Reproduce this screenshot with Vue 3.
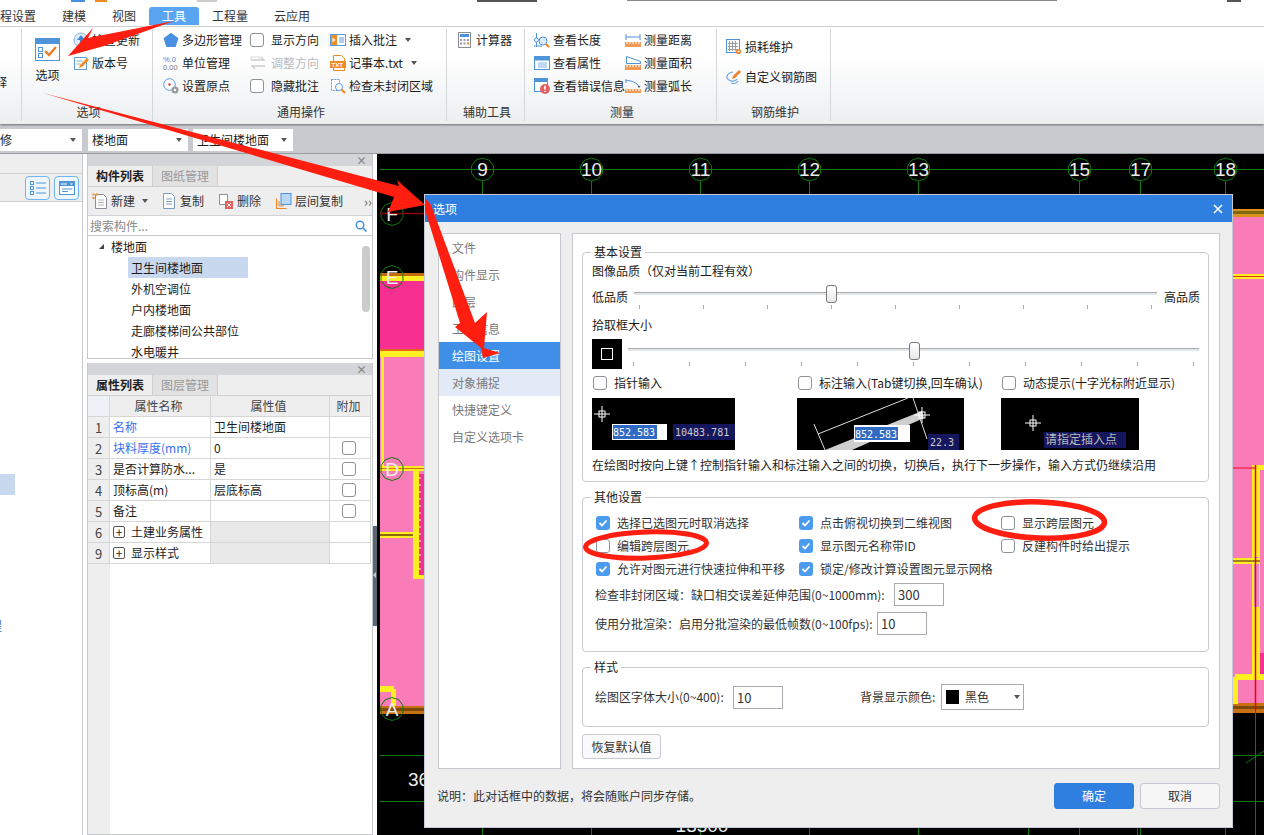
<script setup>
const icons = {
  options: '<rect x=".5" y=".5" width="24" height="22" fill="#fff" stroke="#4f94d8"/><rect x="1" y="1" width="23" height="5" fill="#4f94d8"/><rect x="3.5" y="9.5" width="4" height="4" fill="none" stroke="#4f94d8"/><rect x="3.5" y="15.5" width="4" height="4" fill="none" stroke="#4f94d8"/><path d="M10 13l4 4 7-8" fill="none" stroke="#f07c21" stroke-width="2.4"/>',
  update: '<circle cx="8" cy="8" r="7" fill="#dfeafa" stroke="#8fb6e6"/><path d="M8 3l4 5H9v4H7V8H4z" fill="#3f86d8"/>',
  version: '<path d="M1.500 2.500h12v12h-12z" fill="#fff" stroke="#5b9bdf"/><path d="M3.500 6h6M3.500 9h4" stroke="#8aa" /><path d="M6 13l1-3 7-7 2 2-7 7z" fill="#f08a24"/>',
  polygon: '<path d="M8 .8l7.500 5.400-2.900 8.800H3.400L.5 6.200z" fill="#4a90e2"/>',
  unit: '<text x="0" y="7" font-size="7.500" fill="#3f86d8" font-family="Liberation Sans">%.0</text><text x="0" y="15" font-size="7.500" fill="#777" font-family="Liberation Sans">0.00</text>',
  origin: '<circle cx="6.500" cy="6.500" r="5.800" fill="#fff" stroke="#5b9bdf"/><circle cx="6.500" cy="6.500" r="1.300" fill="#d9453d"/><circle cx="12" cy="12" r="3.500" fill="#999"/><circle cx="12" cy="12" r="1.300" fill="#fff"/>',
  adjust: '<path d="M1 5h13l-3-3M15 11H2l3 3" fill="none" stroke="#c9cbce" stroke-width="1.300"/><rect x="1" y="2" width="9" height="3" fill="none" stroke="#d8d9db"/>',
  note: '<rect x=".5" y="2.500" width="15" height="11" fill="#fff" stroke="#5b9bdf"/><rect x="1" y="3" width="6" height="10" fill="#f08a24"/><path d="M2.500 5.500l3 2.500-3 2.500z" fill="#fff"/><path d="M9 6h5M9 8h5M9 10h5" stroke="#5b9bdf"/>',
  txt: '<path d="M3.500.5h8l3 3v12h-11z" fill="#fff" stroke="#f08a24"/><rect x="0" y="6" width="16" height="7" fill="#f08a24"/><text x="1.500" y="11.800" font-size="6" font-weight="700" fill="#fff" font-family="Liberation Sans">TXT</text>',
  check: '<path d="M1.500 1.500h8v11h-8z" fill="#fff" stroke="#5b9bdf" stroke-dasharray="2 1"/><circle cx="9" cy="9" r="3.500" fill="#fff" stroke="#5b9bdf"/><path d="M11.500 11.500l3.500 3.500" stroke="#f08a24" stroke-width="2.200"/>',
  calc: '<rect x="1.500" y=".5" width="12" height="15" fill="#fff" stroke="#8b8f95"/><rect x="3" y="2" width="9" height="3" fill="#4a90e2"/><path d="M3 7h2v2H3zM6.500 7h2v2h-2zM10 7h2v2h-2zM3 10.500h2v2H3zM6.500 10.500h2v2h-2z" fill="#9a9da2"/><path d="M10 10.500h2v2h-2z" fill="#f08a24"/>',
  length: '<path d="M2.500 1v5M2.500 10v5" stroke="#4f94d8"/><circle cx="2.500" cy="8" r="2" fill="#fff" stroke="#4f94d8"/><circle cx="9" cy="9" r="4" fill="#dceafa" stroke="#4f94d8"/><path d="M12 12l3 3" stroke="#f08a24" stroke-width="2.200"/><path d="M0 14h8" stroke="#4f94d8"/>',
  props: '<rect x=".5" y="1.500" width="15" height="13" fill="#fff" stroke="#4f94d8"/><rect x="1" y="2" width="14" height="3.500" fill="#4f94d8"/><path d="M4 8h9M4 10h9M4 12h9" stroke="#7fb0e6"/>',
  errors: '<rect x=".5" y=".5" width="13" height="13" fill="#fff" stroke="#4f94d8"/><rect x="1" y="1" width="12" height="3" fill="#4f94d8"/><circle cx="11" cy="11" r="5" fill="#e4605e"/><path d="M11 7.800v3.700M11 12.800v1.200" stroke="#fff" stroke-width="1.600"/>',
  dist: '<path d="M1 2v6M15 2v6M1 5h14" fill="none" stroke="#4f94d8"/><rect x="0" y="10" width="16" height="5" fill="#f09b55"/><path d="M2 10v2M5 10v2M8 10v2M11 10v2M14 10v2" stroke="#fff"/>',
  area: '<path d="M1.500 1.500v7h14v-2z" fill="#fff" stroke="#4f94d8"/><rect x="0" y="10" width="16" height="5" fill="#f09b55"/><path d="M2 10v2M5 10v2M8 10v2M11 10v2M14 10v2" stroke="#fff"/>',
  arc: '<path d="M1 1v4M1 2.500c6 0 11 2 13 6.500" fill="none" stroke="#4f94d8"/><path d="M12.500 8h3l-1.500 2z" fill="#555"/><rect x="0" y="11" width="16" height="4" fill="#f09b55"/><path d="M2 11v2M5 11v2M8 11v2M11 11v2M14 11v2" stroke="#fff"/>',
  loss: '<rect x=".5" y=".5" width="13" height="13" fill="#fff" stroke="#4f94d8"/><path d="M3.500 2v10M6.500 2v10M9.500 2v10M2 4.500h10M2 7.500h10M2 10.500h10" stroke="#9a9da2"/><circle cx="12.500" cy="12.500" r="2.600" fill="#f0842a"/><circle cx="12.500" cy="12.500" r="1" fill="#fff"/>',
  rebar: '<path d="M7 3C1 4-1 9 3 11c3 2 7 1 8-1M5 14c3 1 6 0 7-2" fill="none" stroke="#6aa5e6" stroke-width="1.200"/><path d="M6 10l1-3 6-6 2 2-6 6z" fill="#f0842a"/>',
  add: '<path d="M3.500 1.500h8l3 3v11h-11z" fill="#fff" stroke="#8b8f95"/><path d="M6 7h6M6 9.500h6M6 12h6" stroke="#b0b3b8"/><path d="M.5.500h2v2h-2zM4 .5h2v2H4zM.5 4h2v2h-2z" fill="#f08a24"/>',
  copy: '<path d="M2.500.5h8l3 3v12h-11z" fill="#fff" stroke="#7f9cc0"/><path d="M5 6h6M5 8.500h6M5 11h6" stroke="#7f9cc0"/>',
  remove: '<path d="M1.500 1.500h8v10h-8z" fill="#fff" stroke="#8b8f95"/><rect x="7" y="8" width="8" height="8" fill="#e2615f"/><path d="M9 10l4 4M13 10l-4 4" stroke="#fff"/>',
  layer: '<rect x="5" y=".5" width="10" height="11" fill="#bcd7f5" stroke="#4f94d8"/><path d="M.5 5.500v10h10" fill="none" stroke="#f0842a" stroke-width="1.200"/><path d="M3 8v5h5" fill="none" stroke="#f0842a"/>'
}

const ribbonMain = [
  [
    { icon: 'polygon', text: '多边形管理' },
    { icon: 'unit', text: '单位管理' },
    { icon: 'origin', text: '设置原点' }
  ],
  [
    { box: true, text: '显示方向' },
    { icon: 'adjust', text: '调整方向', off: true, tight: true },
    { box: true, text: '隐藏批注' }
  ],
  [
    { icon: 'note', text: '插入批注', caret: true },
    { icon: 'txt', text: '记事本.txt', caret: true },
    { icon: 'check', text: '检查未封闭区域' }
  ]
]
const measureCols = [
  [
    { icon: 'length', text: '查看长度' },
    { icon: 'props', text: '查看属性' },
    { icon: 'errors', text: '查看错误信息' }
  ],
  [
    { icon: 'dist', text: '测量距离' },
    { icon: 'area', text: '测量面积' },
    { icon: 'arc', text: '测量弧长' }
  ]
]
const tabs = ['工程设置', '建模', '视图', '工具', '工程量', '云应用']

const treeItems = ['卫生间楼地面', '外机空调位', '户内楼地面', '走廊楼梯间公共部位', '水电暖井']
const propRows = [
  { no: 1, name: '名称', value: '卫生间楼地面', blue: true },
  { no: 2, name: '块料厚度(mm)', value: '0', blue: true, box: true },
  { no: 3, name: '是否计算防水...', value: '是', box: true },
  { no: 4, name: '顶标高(m)', value: '层底标高', box: true },
  { no: 5, name: '备注', value: '', box: true },
  { no: 6, name: '土建业务属性', group: true },
  { no: 9, name: '显示样式', group: true }
]

const navItems = ['文件', '构件显示', '图层', '工程信息', '绘图设置', '对象捕捉', '快捷键定义', '自定义选项卡']
const otherChecks = [
  { text: '选择已选图元时取消选择', on: true },
  { text: '点击俯视切换到二维视图', on: true },
  { text: '显示跨层图元', on: false },
  { text: '编辑跨层图元', on: false },
  { text: '显示图元名称带ID', on: true },
  { text: '反建构件时给出提示', on: false },
  { text: '允许对图元进行快速拉伸和平移', on: true },
  { text: '锁定/修改计算设置图元显示网格', on: true }
]

function octagon(cx, cy, r) {
  const pts = []
  for (let i = 0; i < 10; i++) {
    const a = (Math.PI * 2 * i) / 10 + 0.3
    pts.push(`${(cx + r * Math.cos(a)).toFixed(1)},${(cy + r * Math.sin(a)).toFixed(1)}`)
  }
  return pts.join(' ')
}
const axisX = [
  { x: 482, t: '9' },
  { x: 591, t: '10' },
  { x: 700, t: '11' },
  { x: 809, t: '12' },
  { x: 918, t: '13' },
  { x: 1079, t: '15' },
  { x: 1140, t: '17' },
  { x: 1225, t: '18' }
]
const axisY = [
  { y: 213, t: 'F' },
  { y: 276, t: 'E' },
  { y: 468, t: 'D' },
  { y: 708, t: 'A' }
]
</script>

<template>
  <div class="app">
    <div class="topline">
      <i class="mark m1"></i><i class="mark m2"></i><i class="mark m3"></i><i class="mark m4"></i>
      <i class="mark m5"></i><i class="mark m6"></i>
    </div>

    <nav class="tabs">
      <span v-for="t in tabs" :key="t" class="tab" :class="{ active: t === '工具' }">{{ t }}</span>
    </nav>

    <div class="ribbon">
      <section class="rb g0">
        <div class="rb-body"><span class="clip-char">注释</span></div>
      </section>

      <section class="rb g1">
        <div class="rb-body">
          <div class="big">
            <svg width="25" height="23" viewBox="0 0 25 23" v-html="icons.options"></svg>
            <span>选项</span>
          </div>
          <div class="rb-col">
            <div class="rb-item"><svg class="ic" viewBox="0 0 16 16" v-html="icons.update"></svg>检查更新</div>
            <div class="rb-item"><svg class="ic" viewBox="0 0 16 16" v-html="icons.version"></svg>版本号</div>
          </div>
        </div>
        <div class="rb-label">选项</div>
      </section>

      <section class="rb g2">
        <div class="rb-body">
          <div v-for="(col, i) in ribbonMain" :key="i" class="rb-col" :class="'c' + i">
            <div v-for="item in col" :key="item.text" class="rb-item" :class="{ off: item.off }">
              <span v-if="item.box" class="cb rb-cb"></span>
              <svg v-else class="ic" :class="{ wide: item.tight }" viewBox="0 0 16 16" v-html="icons[item.icon]"></svg>
              {{ item.text }}
              <i v-if="item.caret" class="caret rb-caret"></i>
            </div>
          </div>
        </div>
        <div class="rb-label">通用操作</div>
      </section>

      <section class="rb g3">
        <div class="rb-body">
          <div class="rb-item"><svg class="ic" viewBox="0 0 16 16" v-html="icons.calc"></svg>计算器</div>
        </div>
        <div class="rb-label">辅助工具</div>
      </section>

      <section class="rb g4">
        <div class="rb-body">
          <div v-for="(col, i) in measureCols" :key="i" class="rb-col m-col">
            <div v-for="item in col" :key="item.text" class="rb-item">
              <svg class="ic" viewBox="0 0 16 16" v-html="icons[item.icon]"></svg>{{ item.text }}
            </div>
          </div>
        </div>
        <div class="rb-label">测量</div>
      </section>

      <section class="rb g5">
        <div class="rb-body">
          <div class="rb-col">
            <div class="rb-item tall"><svg class="ic" viewBox="0 0 16 16" v-html="icons.loss"></svg>损耗维护</div>
            <div class="rb-item tall"><svg class="ic" viewBox="0 0 16 16" v-html="icons.rebar"></svg>自定义钢筋图</div>
          </div>
        </div>
        <div class="rb-label">钢筋维护</div>
      </section>
    </div>

    <div class="selects">
      <div class="sel s1"><span class="clip-char sel-clip">装修</span><i class="caret"></i></div>
      <div class="sel s2"><span>楼地面</span><i class="caret"></i></div>
      <div class="sel s3"><span>卫生间楼地面</span><i class="caret"></i></div>
    </div>

    <div class="main">
      <aside class="left">
        <div class="left-head"></div>
        <div class="left-tools">
          <span class="lbtn">
            <svg width="16" height="14" viewBox="0 0 16 14">
              <rect x=".5" y=".5" width="3" height="3" fill="none" stroke="#4f94d8" />
              <rect x=".5" y="5.500" width="3" height="3" fill="none" stroke="#4f94d8" />
              <rect x=".5" y="10.500" width="3" height="3" fill="none" stroke="#4f94d8" />
              <path d="M6 2h10M6 7h10M6 12h10" stroke="#4f94d8" />
            </svg>
          </span>
          <span class="lbtn">
            <svg width="16" height="14" viewBox="0 0 16 14">
              <rect x=".5" y=".5" width="15" height="13" fill="#fff" stroke="#4f94d8" />
              <rect x="1" y="1" width="14" height="4" fill="#4f94d8" />
              <path d="M3 2v2M5 2v2M7 2v2" stroke="#fff" />
              <path d="M11 2.500h3l-1.500 1.500z" fill="#fff" />
              <path d="M3 8h10M3 10.500h6" stroke="#4f94d8" />
            </svg>
          </span>
        </div>
        <div class="left-tree">
          <div class="left-sel"></div>
          <div class="left-frag">工程</div>
        </div>
      </aside>

      <div class="panels">
        <section class="panel p1">
          <header class="p-head"><span class="p-x">×</span></header>
          <div class="p-tabs">
            <span class="p-tab on">构件列表</span>
            <span class="p-tab">图纸管理</span>
          </div>
          <div class="p-tools">
            <span class="tool t-new"><svg class="ic" viewBox="0 0 16 16" v-html="icons.add"></svg>新建<i class="caret"></i></span>
            <span class="tool t-copy"><svg class="ic" viewBox="0 0 16 16" v-html="icons.copy"></svg>复制</span>
            <span class="tool t-del"><svg class="ic" viewBox="0 0 16 16" v-html="icons.remove"></svg>删除</span>
            <span class="tool t-layer"><svg class="ic" viewBox="0 0 16 16" v-html="icons.layer"></svg>层间复制</span>
            <span class="more">››</span>
          </div>
          <div class="p-search">
            <span>搜索构件...</span>
            <svg width="12" height="12" viewBox="0 0 12 12">
              <circle cx="5" cy="5" r="3.800" fill="none" stroke="#3f8fdc" stroke-width="1.400" />
              <path d="M8 8l3.500 3.500" stroke="#3f8fdc" stroke-width="1.600" />
            </svg>
          </div>
          <div class="p-tree">
            <div class="tree-root"><i class="tree-arrow"></i>楼地面</div>
            <div v-for="(t, i) in treeItems" :key="t" class="tree-row">
              <span :class="{ picked: i === 0 }">{{ t }}</span>
            </div>
            <div class="tree-scroll"></div>
          </div>
        </section>

        <section class="panel p2">
          <header class="p-head"><span class="p-x">×</span></header>
          <div class="p-tabs">
            <span class="p-tab on">属性列表</span>
            <span class="p-tab">图层管理</span>
          </div>
          <div class="grid-wrap">
            <div class="pr pr-head">
              <span class="cell idx"></span>
              <span class="cell mid">属性名称</span>
              <span class="cell mid">属性值</span>
              <span class="cell mid">附加</span>
            </div>
            <div v-for="r in propRows" :key="r.no" class="pr">
              <span class="cell idx">{{ r.no }}</span>
              <span class="cell" :class="{ blue: r.blue }">
                <i v-if="r.group" class="plus">+</i>{{ r.name }}
              </span>
              <span class="cell" :class="{ shade: r.group }">{{ r.value }}</span>
              <span class="cell mid"><i v-if="r.box" class="cb"></i></span>
            </div>
            <div class="pr-rest"></div>
          </div>
        </section>
      </div>

      <div class="splitter"><span class="split-bar"><i class="split-arrow"></i></span></div>

      <div class="canvas">
        <svg class="cad" width="887" height="682" viewBox="377 153 887 682">
          <rect x="380" y="356" width="884" height="349" fill="#f97cb8" />
          <rect x="1225" y="215" width="39" height="141" fill="#f97cb8" />
          <rect x="380" y="280" width="60" height="70" fill="#f62f90" />

          <rect x="1225" y="208" width="39" height="8" fill="#d9921a" />
          <rect x="1225" y="210" width="39" height="3" fill="#7d6a12" />
          <rect x="1225" y="273" width="39" height="5" fill="#ffee22" />
          <rect x="1225" y="275" width="39" height="1" fill="#e03020" />

          <rect x="380" y="272" width="60" height="8" fill="#ffee22" />
          <rect x="380" y="272" width="60" height="3" fill="#c46a10" />
          <rect x="380" y="348" width="60" height="8" fill="#ffee22" />
          <rect x="380" y="348" width="60" height="2" fill="#e5641c" />
          <rect x="381" y="356" width="3" height="110" fill="#ffee22" />
          <rect x="380" y="465" width="60" height="5" fill="#ffee22" />
          <rect x="380" y="467" width="60" height="1" fill="#d8701c" />
          <rect x="380" y="531" width="60" height="6" fill="#ffee22" />
          <rect x="380" y="533" width="60" height="2" fill="#8f6a10" />
          <rect x="413" y="470" width="6" height="108" fill="#ffee22" />
          <rect x="419" y="473" width="21" height="101" fill="#f62f90" />
          <rect x="415" y="574" width="25" height="4" fill="#ffee22" />
          <path d="M420 476V572" stroke="#fff" stroke-dasharray="2 5" />

          <rect x="380" y="685" width="14" height="6" fill="#ffee22" />
          <rect x="391" y="688" width="5" height="18" fill="#ffee22" />
          <rect x="380" y="705" width="60" height="8" fill="#c87012" />
          <rect x="380" y="707" width="60" height="3" fill="#7a4a0a" />

          <rect x="1225" y="702" width="39" height="10" fill="#c87012" />
          <rect x="1225" y="705" width="39" height="3" fill="#7a4a0a" />
          <rect x="1232" y="676" width="6" height="27" fill="#ffee22" />
          <rect x="1235" y="673" width="29" height="6" fill="#ffee22" />
          <rect x="1252" y="464" width="8" height="210" fill="#ffee22" />
          <rect x="1254" y="556" width="5" height="50" fill="#e88bc0" />
          <rect x="1232" y="557" width="28" height="6" fill="#ffee22" />
          <rect x="1232" y="559" width="28" height="2" fill="#a0801a" />
          <rect x="1260" y="464" width="4" height="5" fill="#ffee22" />
          <rect x="1260" y="652" width="4" height="21" fill="#f62f90" />
          <path d="M1232 467H1255" stroke="#f03050" stroke-width="1.500" />
          <path d="M1255.500 464V709" stroke="#f00000" stroke-width="1.500" />

          <g stroke="#0b7a0b" fill="none">
            <path d="M380 168.500H1264M380 754.500H1264M380 800.500H1264" />
            <path v-for="a in axisX" :key="a.t" :d="`M${a.x}.5 180V835`" />
            <path d="M1028.500 800V835M1137.500 800V835M1255.500 709V835M1246 762L1264 750" />
            <polygon v-for="a in axisX" :key="'o' + a.t" :points="octagon(a.x + 0.5, 168.5, 11.5)" />
            <polygon v-for="a in axisY" :key="'p' + a.t" :points="octagon(392, a.y, 11.5)" />
          </g>
          <path d="M380 212.500H425" stroke="#8a0a0a" stroke-width="1.500" />
          <g class="cad-text">
            <text v-for="a in axisX" :key="'t' + a.t" :x="a.x + 0.5" y="175" text-anchor="middle">{{ a.t }}</text>
            <text v-for="a in axisY" :key="'u' + a.t" x="392" :y="a.y + 7" text-anchor="middle">{{ a.t }}</text>
            <text x="408" y="785">3600</text>
            <text x="702" y="831" text-anchor="middle">13500</text>
          </g>
        </svg>
      </div>
    </div>

    <div class="dialog">
      <header class="d-title">
        <span>选项</span>
        <svg width="10" height="10" viewBox="0 0 10 10">
          <path d="M1 1l8 8M9 1l-8 8" stroke="#fff" stroke-width="1.600" />
        </svg>
      </header>
      <div class="d-body">
        <ul class="d-nav">
          <li v-for="n in navItems" :key="n" :class="{ cur: n === '绘图设置', hov: n === '对象捕捉' }">{{ n }}</li>
        </ul>
        <div class="d-panel">
          <div class="group g-basic">
            <span class="legend">基本设置</span>
            <div class="line">图像品质（仅对当前工程有效）</div>
            <div class="slider-row sr1">
              <span class="s-label">低品质</span>
              <div class="slider q">
                <i class="track"></i><i class="thumb"></i>
                <div class="ticks"><i v-for="n in 9" :key="n"></i></div>
              </div>
              <span class="s-label">高品质</span>
            </div>
            <div class="line l2">拾取框大小</div>
            <div class="slider-row sr2">
              <span class="pick"><i></i></span>
              <div class="slider p">
                <i class="track"></i><i class="thumb"></i>
                <div class="ticks"><i v-for="n in 11" :key="n"></i></div>
              </div>
            </div>
            <div class="tri checks">
              <label class="chk"><i class="cb"></i>指针输入</label>
              <label class="chk"><i class="cb"></i>标注输入(Tab键切换,回车确认)</label>
              <label class="chk"><i class="cb"></i>动态提示(十字光标附近显示)</label>
            </div>
            <div class="tri previews">
              <svg width="143" height="52" viewBox="0 0 143 52">
                <rect width="143" height="52" />
                <path d="M2 16h16M10 8v16" stroke="#fff" />
                <rect x="7" y="13" width="6" height="6" fill="none" stroke="#fff" />
                <rect x="20" y="26" width="55" height="16" fill="#fff" />
                <rect x="21" y="27" width="44" height="14" fill="#2f6bc4" />
                <text x="21" y="38" class="mono" fill="#fff">852.583</text>
                <rect x="81" y="26" width="62" height="16" fill="#16165c" />
                <text x="83" y="38" class="mono" fill="#ccc">10483.781</text>
              </svg>
              <svg width="167" height="52" viewBox="0 0 167 52">
                <rect width="167" height="52" />
                <path d="M28 52L125 13l2 7-72 32z" fill="#cfcfcf" />
                <path d="M21 36L111 0M17 26l11 26M116 0l14 41" stroke="#ddd" fill="none" />
                <path d="M117 17h16M125 9v16" stroke="#fff" />
                <rect x="122" y="14" width="6" height="6" fill="none" stroke="#fff" />
                <rect x="57" y="27" width="56" height="17" fill="#fff" />
                <rect x="58" y="29" width="43" height="13" fill="#2f6bc4" />
                <text x="58" y="40" class="mono" fill="#fff">852.583</text>
                <rect x="131" y="36" width="31" height="16" fill="#16165c" />
                <text x="133" y="48" class="mono" fill="#ccc">22.3</text>
              </svg>
              <svg width="138" height="52" viewBox="0 0 138 52">
                <rect width="138" height="52" />
                <path d="M24 25h16M32 17v16" stroke="#fff" />
                <rect x="29" y="22" width="6" height="6" fill="none" stroke="#fff" />
                <rect x="43" y="34" width="82" height="16" fill="#16165c" />
                <text x="44" y="46" class="cjk" fill="#bbb">请指定插入点</text>
              </svg>
            </div>
            <div class="line l3">在绘图时按向上键↑控制指针输入和标注输入之间的切换，切换后，执行下一步操作，输入方式仍继续沿用</div>
          </div>

          <div class="group g-other">
            <span class="legend">其他设置</span>
            <div class="other-grid">
              <label v-for="c in otherChecks" :key="c.text" class="chk" :class="{ flag: !c.on }">
                <i class="cb" :class="{ on: c.on }">
                  <svg v-if="c.on" width="14" height="14" viewBox="0 0 14 14">
                    <path d="M3.500 7l2.500 2.500 4.500-5" fill="none" stroke="#fff" stroke-width="1.800" />
                  </svg>
                </i>{{ c.text }}
              </label>
            </div>
            <div class="field f1"><span class="f-label w1">检查非封闭区域：缺口相交误差延伸范围(0~1000mm):</span><span class="inp">300</span></div>
            <div class="field f2"><span class="f-label w2">使用分批渲染：启用分批渲染的最低帧数(0~100fps):</span><span class="inp">10</span></div>
          </div>

          <div class="group g-style">
            <span class="legend">样式</span>
            <div class="field f3">
              <span class="f-label w3">绘图区字体大小(0~400):</span><span class="inp">10</span>
              <span class="f-label w4">背景显示颜色:</span>
              <span class="color-sel"><i class="swatch"></i>黑色<i class="caret"></i></span>
            </div>
          </div>

          <button class="reset">恢复默认值</button>
        </div>
      </div>
      <footer class="d-foot">
        <span class="d-note">说明：此对话框中的数据，将会随账户同步存储。</span>
        <button class="btn primary">确定</button>
        <button class="btn">取消</button>
      </footer>
    </div>

    <svg class="marks" width="1264" height="835" viewBox="0 0 1264 835">
      <g fill="#ff1e10">
        <path d="M174 21L88 38l5-10-25 28 36-10z" />
        <path d="M43 93L399 186l-2-6 28 25-37 7 6-15z" />
        <path d="M425 198l6 7 44 118 12-11-3 36 16 5-17 5-2-10-26-21 5-4-35-113z" />
      </g>
      <g fill="none" stroke="#ff1e10">
        <ellipse cx="1039.500" cy="520" rx="65" ry="18" stroke-width="5.500" transform="rotate(2 1039 520)" />
        <ellipse cx="646" cy="545" rx="60.500" ry="13" stroke-width="5" transform="rotate(-2 646 545)" />
      </g>
    </svg>
  </div>
</template>

<style>
html,
body {
  margin: 0;
  overflow: hidden;
  background: #fff;
}
</style>

<style scoped>
.app {
  position: relative;
  width: 1264px;
  height: 835px;
  overflow: hidden;
  display: flex;
  flex-direction: column;
  font: 12px/1 "Noto Sans CJK SC", "Liberation Sans", sans-serif;
  text-spacing-trim: space-all;
  color: #1c1c1c;
  background: #fff;
}
.topline {
  height: 7px;
  display: flex;
  align-items: flex-start;
}
.mark {
  display: block;
  height: 2px;
}
.m1 { width: 14px; margin-left: 71px; background: #4a90e2; }
.m2 { width: 12px; margin-left: 10px; background: #f08a24; }
.m3 { width: 20px; margin-left: 90px; background: #ccc; }
.m4 { width: 60px; margin-left: 260px; background: #555; }
.m5 { width: 430px; margin-left: 90px; height: 1px; background: #888; }
.m6 { width: 14px; margin-left: 170px; background: #555; }

.tabs {
  height: 19px;
  display: flex;
  margin-left: -25px;
  border-bottom: 1px solid #d8d8d8;
}
.tab {
  padding: 0 13px;
  height: 18px;
  line-height: 18px;
  color: #333;
}
.tab.active {
  background: #5aa5f2;
  color: #fff;
  border-radius: 3px 3px 0 0;
}

.ribbon {
  height: 97px;
  padding-top: 2px;
  box-sizing: border-box;
  display: flex;
  background: linear-gradient(#fff 30%, #eceef0);
  box-shadow: 0 1px 2px rgba(0, 0, 0, 0.45);
  position: relative;
}
.rb {
  box-sizing: border-box;
  height: 92px;
  border-right: 1px solid #d5d7da;
  display: flex;
  flex-direction: column;
  flex: none;
}
.rb-body {
  height: 76px;
  margin-top: -1px;
  box-sizing: border-box;
  display: flex;
}
.rb-label {
  text-align: center;
  padding-left: 3px;
  line-height: 18px;
  color: #333;
}
.g0 { width: 22px; overflow: hidden; border-right-color: #d5d7da; }
.g0 .rb-body { padding-top: 48px; }
.clip-char { margin-left: -17px; white-space: nowrap; }
.g1 { width: 131px; }
.g1 .rb-body { padding-left: 13px; }
.g2 { width: 294px; }
.g2 .rb-body { padding-left: 10px; }
.g3 { width: 78px; }
.g3 .rb-body { padding-left: 10px; }
.g4 { width: 192px; }
.g4 .rb-body { padding-left: 9px; }
.g5 { width: 114px; }
.g5 .rb-body { padding-left: 9px; padding-top: 4px; }
.big {
  width: 25px;
  margin-right: 13px;
  padding-top: 10px;
  display: flex;
  flex-direction: column;
  align-items: center;
  gap: 8px;
}
.rb-item {
  height: 23px;
  display: flex;
  align-items: center;
  white-space: nowrap;
}
.rb-item.tall { height: 30px; }
.rb-item.off { color: #b8babd; }
.ic {
  width: 16px;
  height: 16px;
  margin-right: 3px;
  flex: none;
}
.c0 { width: 87px; }
.c1 { width: 80px; }
.m-col { width: 102px; }
.rb-cb { margin-right: 7px; }
.ic.wide { margin-right: 5px; }
.rb-caret { margin-left: 8px; }

.cb {
  display: inline-block;
  width: 14px;
  height: 14px;
  box-sizing: border-box;
  border: 1px solid #8e9197;
  border-radius: 3px;
  background: #fff;
  flex: none;
}
.cb.on {
  border: 0;
  background: #4b9bef;
}
.cb.on svg { display: block; }
.caret {
  display: inline-block;
  width: 0;
  height: 0;
  border: 3px solid transparent;
  border-top: 4px solid #555;
  border-bottom: 0;
}

.selects {
  height: 30px;
  flex: none;
  background: #c8cad0;
  display: flex;
  align-items: center;
  gap: 5px;
  border-bottom: 1px solid #9a9ca0;
  box-sizing: border-box;
  padding-top: 2px;
}
.sel {
  box-sizing: border-box;
  height: 22px;
  background: #fff;
  display: flex;
  align-items: center;
  justify-content: space-between;
  padding: 0 6px 0 4px;
  white-space: nowrap;
}
.s1 { width: 82px; margin-right: 1px; overflow: hidden; padding-left: 0; }
.s2 { width: 100px; }
.s3 { width: 100px; }
.sel-clip { margin-left: -12px; }

.main {
  flex: 1;
  min-height: 0;
  display: flex;
}
.left {
  width: 83px;
  flex: none;
  box-sizing: border-box;
  background: #eee;
  border-right: 1px solid #c6c8ce;
  display: flex;
  flex-direction: column;
}
.left-head {
  height: 19px;
  border-bottom: 1px solid #cfd1d6;
}
.left-tools {
  height: 28px;
  box-sizing: border-box;
  padding: 2px 3px 0 0;
  display: flex;
  justify-content: flex-end;
  gap: 4px;
  border-bottom: 1px solid #cfd1d6;
}
.lbtn {
  width: 25px;
  height: 24px;
  box-sizing: border-box;
  border: 1px solid #70b4f2;
  border-radius: 4px;
  background: #eef5fd;
  display: flex;
  align-items: center;
  justify-content: center;
}
.left-tree {
  flex: 1;
  background: #fff;
  position: relative;
}
.left-sel {
  width: 15px;
  height: 21px;
  margin-top: 272px;
  background: #c8d8ef;
}
.left-frag {
  margin-top: 125px;
  margin-left: -22px;
  color: #2f6fd0;
  white-space: nowrap;
}

.panels {
  width: 286px;
  flex: none;
  margin-left: 4px;
  display: flex;
  flex-direction: column;
  gap: 4px;
}
.panel {
  box-sizing: border-box;
  border: 1px solid #c6c8ce;
  border-top: 0;
  background: #eee;
  display: flex;
  flex-direction: column;
}
.p1 { height: 205px; }
.p2 { flex: 1; min-height: 0; }
.p-head {
  height: 12px;
  background: #d3d5d9;
  display: flex;
  justify-content: flex-end;
  align-items: center;
  padding-right: 5px;
  flex: none;
}
.p-x {
  font-size: 11px;
  font-weight: 700;
  color: #888;
}
.p-tabs {
  height: 21px;
  display: flex;
  flex: none;
  border-bottom: 1px solid #d0d0d0;
  box-sizing: border-box;
}
.p-tab {
  width: 64px;
  text-align: center;
  line-height: 19px;
  color: #999;
  background: #e2e2e2;
  border-right: 1px solid #cfcfcf;
}
.p-tab.on {
  color: #222;
  font-weight: 700;
  background: #eee;
}
.p-tools {
  height: 29px;
  flex: none;
  display: flex;
  align-items: center;
  padding-left: 4px;
  color: #333;
  border-bottom: 1px solid #d0d2d6;
  box-sizing: border-box;
}
.tool {
  display: flex;
  align-items: center;
}
.tool .caret { margin-left: 7px; }
.t-new { width: 69px; }
.t-copy { width: 57px; }
.t-del { width: 58px; }
.t-layer { width: 88px; }
.more {
  color: #666;
  font-size: 13px;
}
.p-search {
  height: 20px;
  flex: none;
  display: flex;
  align-items: center;
  justify-content: space-between;
  padding: 0 5px 0 2px;
  background: #fff;
  color: #8a8a8a;
  border-bottom: 1px solid #c6c8ce;
  box-sizing: border-box;
}
.p-tree {
  flex: 1;
  min-height: 0;
  overflow: hidden;
  background: #fff;
  position: relative;
  padding-top: 0;
}
.tree-root {
  height: 21px;
  display: flex;
  align-items: center;
  padding-left: 11px;
  gap: 7px;
}
.tree-arrow {
  width: 0;
  height: 0;
  border-bottom: 5px solid #444;
  border-left: 5px solid transparent;
}
.tree-row {
  height: 21px;
  line-height: 21px;
  padding-left: 40px;
}
.tree-row span {
  display: inline-block;
  padding-left: 3px;
  min-width: 117px;
  height: 21px;
}
.tree-row .picked { background: #c8d8ef; }
.tree-scroll {
  position: absolute;
  top: 10px;
  right: 2px;
  width: 8px;
  height: 66px;
  border-radius: 4px;
  background: #cbcbcb;
}

.grid-wrap {
  flex: 1;
  min-height: 0;
  display: flex;
  flex-direction: column;
  background: #fff;
}
.pr {
  display: grid;
  grid-template-columns: 22px 101px 119px 41px;
  height: 21px;
  flex: none;
  box-sizing: border-box;
  border-bottom: 1px solid #d6d6d6;
  width: 283px;
}
.pr-head {
  background: #eee;
  color: #444;
}
.cell {
  box-sizing: border-box;
  border-right: 1px solid #d6d6d6;
  display: flex;
  align-items: center;
  padding-left: 3px;
  white-space: nowrap;
  overflow: hidden;
}
.cell.idx {
  background: #eee;
  justify-content: center;
  padding: 0;
  color: #444;
  font-size: 13px;
}
.pr-head .cell.idx { background: #eef2f8; }
.cell.mid {
  justify-content: center;
  padding: 0 3px 0 0;
}
.cell.blue { color: #3a6ff0; }
.cell.shade { background: #e9e9e9; }
.plus {
  display: inline-flex;
  width: 12px;
  height: 12px;
  box-sizing: border-box;
  border: 1px solid #555;
  border-radius: 2px;
  align-items: center;
  justify-content: center;
  font-style: normal;
  margin-right: 6px;
}
.pr-rest {
  flex: 1;
  background: linear-gradient(90deg, #eee 22px, #fff 22px);
}

.splitter {
  width: 4px;
  flex: none;
  margin-left: 0;
  background: #fff;
  position: relative;
}
.split-bar {
  position: absolute;
  top: 372px;
  left: 0;
  width: 4px;
  height: 100px;
  background: #5a6874;
}
.split-arrow {
  position: absolute;
  top: 46px;
  left: 0;
  width: 0;
  height: 0;
  border: 3px solid transparent;
  border-right: 3px solid #c5ccd2;
  border-left: 0;
}
.canvas {
  flex: 1;
  background: #000;
  min-width: 0;
}
.cad { display: block; }
.cad-text text {
  fill: #eee;
  font: 19px "Liberation Sans", sans-serif;
}

.dialog {
  position: absolute;
  left: 425px;
  top: 195px;
  width: 807px;
  height: 632px;
  background: #eee;
  box-shadow: 0 0 0 1px #c6cad6;
  display: flex;
  flex-direction: column;
}
.d-title {
  height: 27px;
  flex: none;
  box-sizing: border-box;
  background: #2e7fe0;
  color: #fff;
  display: flex;
  align-items: center;
  justify-content: space-between;
  padding: 0 9px 0 8px;
}
.d-body {
  height: 536px;
  margin-top: 11px;
  padding-left: 13px;
  display: flex;
  gap: 11px;
  flex: none;
}
.d-nav {
  list-style: none;
  margin: 0;
  padding: 0;
  width: 123px;
  box-sizing: border-box;
  background: #fff;
  border: 1px solid #c6c8ce;
  flex: none;
}
.d-nav li {
  height: 27px;
  line-height: 27px;
  padding-left: 13px;
  color: #7a7a7a;
}
.d-nav li.cur {
  background: #3f8fe8;
  color: #fff;
}
.d-nav li.hov { background: #e2eaf8; }
.d-panel {
  width: 648px;
  box-sizing: border-box;
  background: #fff;
  border: 1px solid #c6c8ce;
  padding: 18px 10px 0 9px;
  flex: none;
}
.group {
  position: relative;
  box-sizing: border-box;
  border: 1px solid #c9cbd1;
  border-radius: 4px;
}
.legend {
  position: absolute;
  top: -8px;
  left: 8px;
  padding: 0 3px;
  background: #fff;
  line-height: 14px;
}
.g-basic {
  height: 230px;
  padding: 9px 9px 0;
}
.line {
  height: 18px;
  line-height: 18px;
  white-space: nowrap;
}
.l2 { margin-top: 7px; }
.l3 { margin-top: 6px; }
.slider-row {
  display: flex;
  align-items: center;
}
.s-label {
  flex: none;
  white-space: nowrap;
}
.sr1 {
  height: 24px;
  margin-top: 5px;
  gap: 6px;
  padding-bottom: 0;
}
.sr1 .slider { width: 523px; margin-right: 1px; flex: none; }
.sr2 {
  height: 30px;
  margin-top: 5px;
  gap: 6px;
}
.sr2 .slider { width: 571px; flex: none; }
.slider {
  position: relative;
  height: 100%;
}
.track {
  position: absolute;
  left: 0;
  right: 0;
  height: 3px;
  background: #e3e6e8;
  border-top: 1px solid #a8aaac;
  box-sizing: border-box;
}
.q .track { top: 7px; }
.p .track { top: 9px; }
.thumb {
  position: absolute;
  width: 11px;
  height: 18px;
  box-sizing: border-box;
  background: linear-gradient(#fff, #e8e8e8);
  border: 1px solid #777;
  border-radius: 3px;
}
.q .thumb { left: 192px; top: 0; }
.p .thumb { left: 281px; top: 3px; }
.ticks {
  position: absolute;
  left: 5px;
  right: 5px;
  display: flex;
  justify-content: space-between;
}
.q .ticks { top: 20px; }
.p .ticks { top: 23px; }
.ticks i {
  width: 1px;
  height: 4px;
  background: #aaa;
}
.pick {
  width: 30px;
  height: 30px;
  background: #000;
  display: flex;
  align-items: center;
  justify-content: center;
  flex: none;
}
.pick i {
  width: 10px;
  height: 10px;
  border: 1px solid #fff;
}
.tri {
  display: grid;
  grid-template-columns: 205px 204px 1fr;
}
.checks {
  height: 18px;
  margin-top: 5px;
}
.previews {
  height: 52px;
  margin-top: 6px;
}
.previews svg { display: block; }
.mono {
  font: 10px "DejaVu Sans Mono", monospace;
}
.cjk {
  font: 12px "Noto Sans CJK SC", sans-serif;
}
.chk {
  display: flex;
  align-items: center;
  gap: 7px;
  white-space: nowrap;
}
.checks .chk { padding-left: 1px; }
.g-other {
  height: 155px;
  margin-top: 15px;
  padding: 13px 0 0 13px;
}
.other-grid {
  display: grid;
  grid-template-columns: 203px 202px 1fr;
  grid-auto-rows: 23px;
  color: #333;
}
.field {
  display: flex;
  align-items: center;
  color: #333;
  margin-left: -1px;
  white-space: nowrap;
}
.f1 { margin-top: 3px; }
.f2 { margin-top: 6px; }
.f-label { display: block; }
.w1 { width: 299px; }
.w2 { width: 282px; }
.w3 { width: 138px; }
.w4 { width: 81px; margin-left: 77px; }
.inp {
  box-sizing: border-box;
  width: 50px;
  height: 23px;
  line-height: 21px;
  padding-left: 3px;
  border: 1px solid #a9abb0;
  background: #fff;
  font-size: 13px;
}
.g-style {
  height: 60px;
  margin-top: 15px;
  padding: 16px 0 0 13px;
}
.color-sel {
  box-sizing: border-box;
  width: 83px;
  height: 26px;
  border: 1px solid #a9abb0;
  display: flex;
  align-items: center;
  padding-left: 4px;
  position: relative;
}
.swatch {
  width: 13px;
  height: 14px;
  background: #000;
  margin-right: 6px;
}
.color-sel .caret {
  position: absolute;
  right: 3px;
  top: 10px;
}
.reset {
  display: block;
  margin-top: 7px;
  width: 79px;
  height: 25px;
  padding: 0;
  font: inherit;
  color: #333;
  background: #fafafa;
  border: 1px solid #c6c9d4;
  border-radius: 3px;
}
.d-foot {
  flex: 1;
  display: flex;
  align-items: flex-start;
  padding: 14px 12px 0 12px;
  gap: 6px;
}
.d-note {
  flex: 1;
  line-height: 26px;
  color: #333;
}
.btn {
  width: 80px;
  height: 26px;
  padding: 0;
  font: inherit;
  color: #333;
  background: #f6f6f6;
  border: 1px solid #c6c9d4;
  border-radius: 3px;
}
.btn.primary {
  background: #2e7fe0;
  border-color: #2e7fe0;
  color: #fff;
}
.marks {
  position: absolute;
  left: 0;
  top: 0;
  pointer-events: none;
}
</style>
